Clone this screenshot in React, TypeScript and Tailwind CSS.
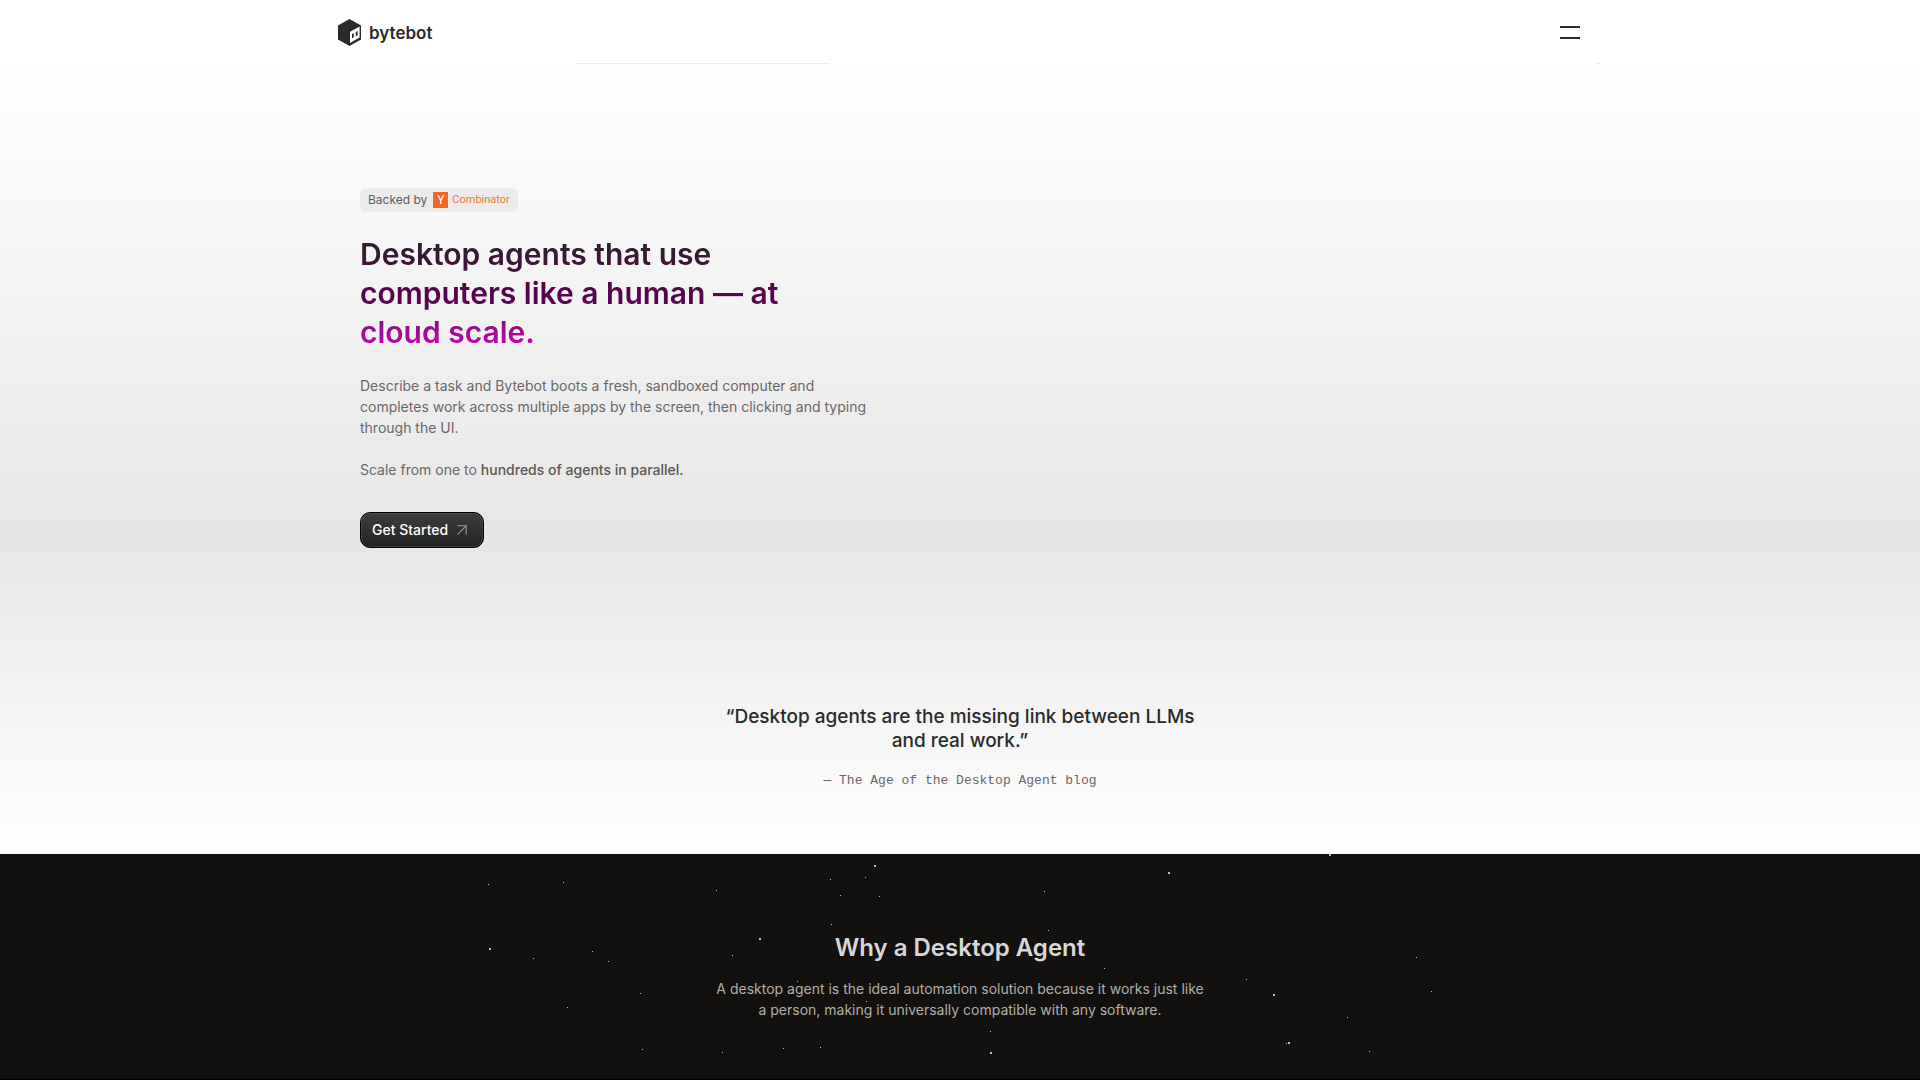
import { ArrowUpRight } from 'lucide-react'

const stars = [
  [488, 30, 1], [563, 28, 1], [716, 36, 1], [830, 25, 1], [865, 23, 1],
  [874, 11, 2], [840, 41, 1], [879, 42, 1], [1044, 37, 1], [831, 70, 1],
  [1048, 76, 1], [759, 84, 2], [489, 94, 2], [533, 104, 1], [592, 97, 1],
  [608, 107, 1], [732, 101, 1], [640, 139, 1], [567, 153, 1], [797, 127, 1],
  [866, 147, 1], [642, 195, 1], [722, 198, 1], [783, 194, 1], [820, 193, 1],
  [990, 177, 1], [990, 198, 2], [1168, 18, 2], [1329, 0, 2], [1104, 114, 1],
  [1246, 125, 1], [1273, 140, 2], [1416, 103, 1], [1431, 137, 1],
  [1347, 163, 1], [1288, 188, 2], [1286, 189, 1], [1369, 197, 1],
]

function Logo() {
  return (
    <a href="#" className="flex items-center gap-2 text-[#2b2a2a]">
      <svg width="23" height="27" viewBox="0 0 23 27" aria-hidden="true">
        <path d="M11.5 0 23 6.5v14L11.5 27 0 20.5v-14Z" fill="currentColor" />
        <path d="M12 12.8 21.6 7.6v11L12 24Z" fill="#fff" />
        <path d="M14 15l1.8-1v4.2l-1.8 1ZM17.8 13l1.8-1v4.2l-1.8 1Z" fill="currentColor" />
      </svg>
      <span className="text-[17px] leading-6 font-semibold">bytebot</span>
    </a>
  )
}

function Header() {
  return (
    <header className="bg-white">
      <div className="mx-auto max-w-[1280px]">
        <div className="flex h-[63px] items-center justify-between pt-[2px] pr-5 pl-[18px]">
          <Logo />
          <button type="button" aria-label="Open menu" className="flex w-5 flex-col gap-[9px]">
            <span className="h-[2px] bg-[#2b2a2a]" />
            <span className="h-[2px] bg-[#2b2a2a]" />
          </button>
        </div>
        <div className="flex h-px justify-between">
          <span className="ml-64 w-[254px] bg-[#ebebeb]" />
          <span className="w-1 bg-[#ebebeb]" />
        </div>
      </div>
    </header>
  )
}

function Hero() {
  return (
    <section className="bg-[linear-gradient(to_bottom,#ffffff_0%,#e6e6e6_60%,#ffffff_100%)]">
      <div className="mx-auto max-w-[1280px] px-10 pt-[124px]">
        <div className="flex max-w-[560px] flex-col items-start">
          <div className="flex h-6 items-center rounded-md bg-[#ebebeb] px-2">
            <span className="text-xs text-[#5f5b5b]">Backed by</span>
            <span className="ml-[6px] flex h-4 w-[15px] items-center justify-center bg-[#f26522] font-['Roboto',sans-serif] text-xs text-white">
              Y
            </span>
            <span className="ml-1 font-['Roboto',sans-serif] text-[11px] text-[#f0783c]">Combinator</span>
          </div>

          <h1 className="mt-[23px] bg-[linear-gradient(to_bottom,#262626_0%,#4a0a40_36%,#5f0058_62%,#960d88_78%,#d400bc_100%)] bg-clip-text text-[30px] leading-[39px] font-semibold text-transparent">
            Desktop agents that use
            <br />
            computers like a human — at
            <br />
            cloud scale.
          </h1>

          <p className="mt-[23px] text-sm leading-[21px] text-[#6b6767]">
            Describe a task and Bytebot boots a fresh, sandboxed computer and
            <br />
            completes work across multiple apps by the screen, then clicking and typing
            <br />
            through the UI.
          </p>
          <p className="mt-[21px] text-sm leading-[21px] text-[#6b6767]">
            Scale from one to{' '}
            <strong className="font-medium text-[#5a5656]">hundreds of agents in parallel.</strong>
          </p>

          <a
            href="#"
            className="mt-8 flex h-9 items-center gap-1 rounded-[10px] border border-black bg-linear-to-b from-[#3f3f3f] to-[#222222] px-[11px] text-sm font-medium text-white inset-ring inset-ring-white/10"
          >
            Get Started
            <ArrowUpRight size={20} strokeWidth={1.25} className="text-[#9a9a9a]" />
          </a>
        </div>
      </div>

      <figure className="mx-auto max-w-[520px] pt-[157px] pb-[63px] text-center">
        <blockquote className="text-[19px] leading-6 font-medium text-[#2b2a2a]">
          “Desktop agents are the missing link between LLMs
          <br />
          and real work.”
        </blockquote>
        <figcaption className="mt-[18px] font-['Liberation_Mono',monospace] text-[13px] leading-5 text-[#6b6767]">
          — The Age of the Desktop Agent blog
        </figcaption>
      </figure>
    </section>
  )
}

function WhyDesktopAgent() {
  return (
    <section className="relative overflow-hidden border-b border-black bg-[#12110f] px-10 pt-20 pb-[59px] text-center">
      <svg
        viewBox="0 0 1920 226"
        preserveAspectRatio="xMidYMin slice"
        className="absolute inset-x-0 top-0 h-[226px] w-full"
        shapeRendering="crispEdges"
        aria-hidden="true"
      >
        {stars.map(([x, y, size]) => (
          <rect key={`${x}-${y}`} x={x} y={y} width={size} height={size} fill="#bdbdbd" />
        ))}
      </svg>
      <h2 className="relative text-2xl leading-7 font-semibold text-[#d9d7d6]">Why a Desktop Agent</h2>
      <p className="relative mt-4 text-sm leading-[21px] text-[#b3adaa]">
        A desktop agent is the ideal automation solution because it works just like
        <br />
        a person, making it universally compatible with any software.
      </p>
    </section>
  )
}

export default function App() {
  return (
    <div className="bg-white font-['Inter',sans-serif]">
      <Header />
      <Hero />
      <WhyDesktopAgent />
    </div>
  )
}
